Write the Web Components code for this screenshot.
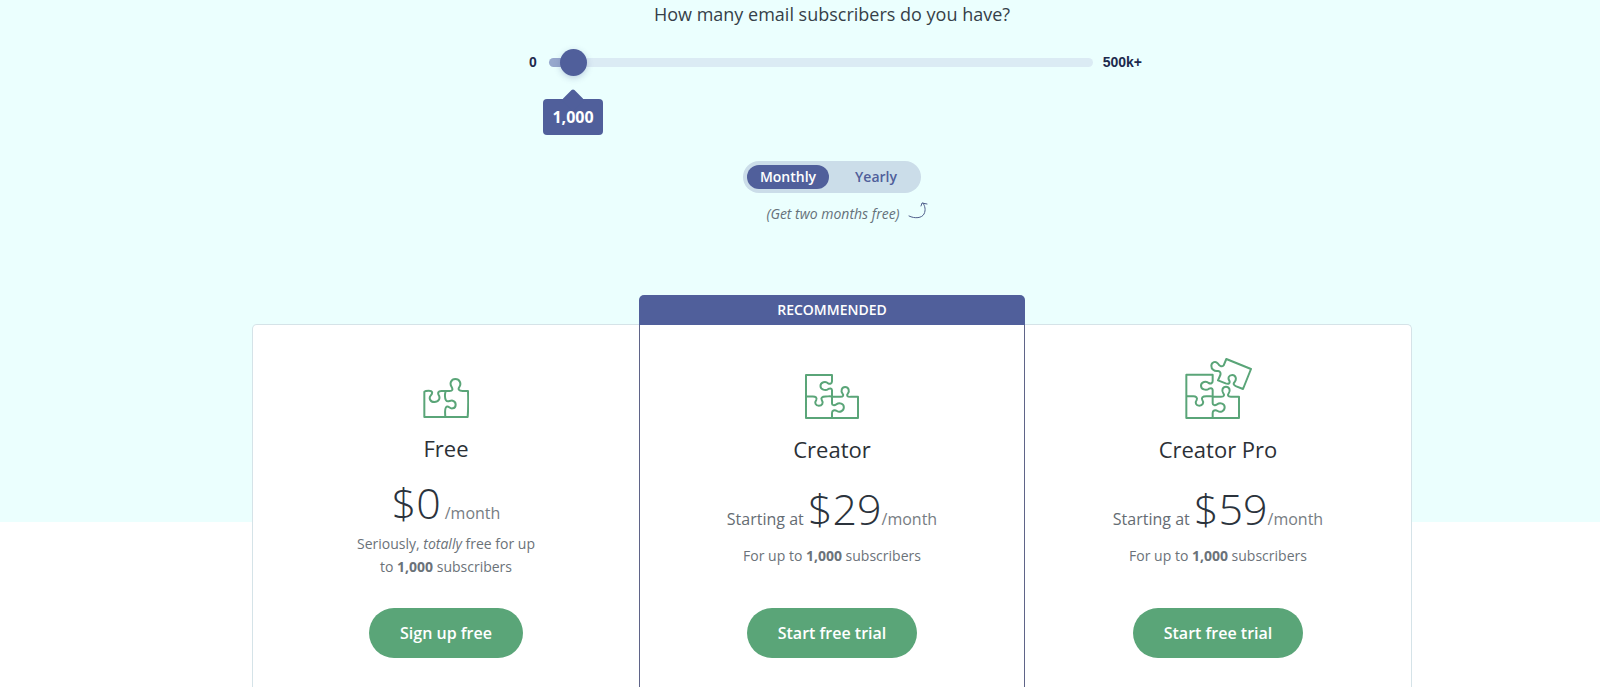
<!DOCTYPE html>
<html lang="en">
<head>
<meta charset="utf-8">
<meta name="viewport" content="width=device-width, initial-scale=1">
<title>Pricing</title>
<style>
body {
  margin: 0;
  font-family: "Open Sans", "Noto Sans", sans-serif;
  color: #363f49;
  --indigo: #505f9b;
  --green: #5aa578;
  --tint: #ebfffe;
}
</style>
</head>
<body>
<pricing-page>
  <subscriber-slider slot="controls"></subscriber-slider>
  <billing-toggle slot="controls"></billing-toggle>

  <plan-card compact>
    <puzzle-icon slot="icon" pieces="2"></puzzle-icon>
    <span slot="name">Free</span>
    <span slot="price">$0</span>
    <span slot="note">Seriously, <em>totally</em> free for up<br>to <b>1,000</b> subscribers</span>
    <span slot="action">Sign up free</span>
  </plan-card>
  <plan-card recommended>
    <puzzle-icon slot="icon" pieces="3"></puzzle-icon>
    <span slot="name">Creator</span>
    <span slot="prefix">Starting at</span>
    <span slot="price">$29</span>
    <span slot="note">For up to <b>1,000</b> subscribers</span>
    <span slot="action">Start free trial</span>
  </plan-card>
  <plan-card>
    <puzzle-icon slot="icon" pieces="4"></puzzle-icon>
    <span slot="name">Creator Pro</span>
    <span slot="prefix">Starting at</span>
    <span slot="price">$59</span>
    <span slot="note">For up to <b>1,000</b> subscribers</span>
    <span slot="action">Start free trial</span>
  </plan-card>
</pricing-page>

<script>
class PricingPage extends HTMLElement {
  constructor() {
    super()
    this.attachShadow({ mode: "open" })
  }

  connectedCallback() {
    this.shadowRoot.innerHTML = `
    <style>
    :host {
      display: flex;
      flex-direction: column;
      align-items: center;
      box-sizing: border-box;
      min-height: 100vh;
      padding-left: 64px;
      background: linear-gradient(var(--tint) 522px, #fff 522px);
    }
    .controls {
      display: flex;
      flex-direction: column;
      align-items: center;
      width: 100%;
    }
    .plans {
      flex: 1;
      display: grid;
      grid-template-columns: repeat(3, 1fr);
      box-sizing: border-box;
      width: 100%;
      max-width: 1160px;
      margin-top: 97px;
      background: #fff;
      border: 1px solid #d5e3e8;
      border-bottom: 0;
      border-radius: 5px 5px 0 0;
    }
    </style>
    <div class="controls"><slot name="controls"></slot></div>
    <div class="plans"><slot></slot></div>`
  }
}

class SubscriberSlider extends HTMLElement {
  constructor() {
    super()
    this.attachShadow({ mode: "open" })
  }

  connectedCallback() {
    this.shadowRoot.innerHTML = `
    <style>
    :host {
      display: block;
      width: 620px;
      max-width: 100%;
      text-align: center;
    }
    .question {
      display: block;
      font-size: 18px;
      line-height: 28px;
    }
    .row {
      display: flex;
      align-items: center;
      margin-top: 20px;
      padding-left: 7px;
      font: bold 14px/28px "Liberation Sans", sans-serif;
      color: #1d2a4d;
    }
    .low { width: 20px; text-align: left; }
    .high { margin-left: 10px; }
    .track {
      position: relative;
      flex: 1;
      display: flex;
    }
    input {
      -webkit-appearance: none;
      appearance: none;
      width: 100%;
      height: 9px;
      margin: 0;
      border-radius: 5px;
      background: linear-gradient(to right, #97a8cd 24px, #dbebf4 24px);
    }
    input::-webkit-slider-thumb {
      -webkit-appearance: none;
      width: 27px;
      height: 27px;
      border-radius: 50%;
      background: var(--indigo);
      box-shadow: 0 2px 6px rgba(80, 95, 155, 0.3);
    }
    .bubble {
      position: absolute;
      top: 41px;
      left: 24px;
      transform: translateX(-50%);
      width: 60px;
      border-radius: 4px;
      background: var(--indigo);
      color: #fff;
      font: 700 16px/36px "Open Sans", "Noto Sans", sans-serif;
    }
    .bubble::before {
      content: "";
      position: absolute;
      left: 22px;
      top: -7px;
      width: 16px;
      height: 16px;
      border-radius: 2px;
      background: var(--indigo);
      transform: rotate(45deg);
    }
    .bubble span { position: relative; }
    </style>
    <label class="question" for="count">How many email subscribers do you have?</label>
    <div class="row">
      <span class="low">0</span>
      <div class="track">
        <input id="count" type="range" min="0" max="45" value="1">
        <output class="bubble" for="count"><span>1,000</span></output>
      </div>
      <span class="high">500k+</span>
    </div>`
  }
}

class BillingToggle extends HTMLElement {
  constructor() {
    super()
    this.attachShadow({ mode: "open" })
  }

  connectedCallback() {
    this.shadowRoot.innerHTML = `
    <style>
    :host {
      display: flex;
      flex-direction: column;
      align-items: center;
      margin-top: 85px;
    }
    .switch {
      display: flex;
      padding: 4px;
      border-radius: 16px;
      background: #cbdde9;
    }
    input {
      position: absolute;
      opacity: 0;
      margin: 0;
    }
    label {
      width: 82px;
      border-radius: 12px;
      color: var(--indigo);
      font-size: 14px;
      font-weight: 600;
      line-height: 24px;
      text-align: center;
    }
    label + input + label { margin-left: 6px; }
    input:checked + label {
      background: var(--indigo);
      color: #fff;
    }
    .hint {
      display: flex;
      align-items: center;
      gap: 8px;
      margin: 8px 0 0 30px;
      color: #65717a;
      font-size: 14px;
      font-style: italic;
      line-height: 26px;
    }
    svg { margin-bottom: 8px; }
    </style>
    <div class="switch">
      <input type="radio" name="billing" id="monthly" checked><label for="monthly">Monthly</label>
      <input type="radio" name="billing" id="yearly"><label for="yearly">Yearly</label>
    </div>
    <div class="hint">
      <span>(Get two months free)</span>
      <svg width="20" height="17" viewBox="0 0 20 17" fill="none" stroke="#505f8b" stroke-width="1" stroke-linecap="round">
        <path d="M1 14C7 17 14 16 16 12C18 8 17 4 15 1M13 4L14 1L19 2"/>
      </svg>
    </div>`
  }
}

// Three interlocking pieces, shared by the two larger icons
const threePieces = `
  <path d="M111 104V84C110 77 104 78 100 80C91 87 76 82 76 71C76 59 92 56 99 63C105 66 111 64 111 57V38H32V168H190V104H168C156 105 155 99 159 94C165 87 162 74 151 74C140 74 137 87 143 94C147 99 146 104 136 104H111C108 101 100 103 92 103C79 103 77 108 80 114C86 122 81 131 71 131C61 131 57 122 63 114C66 107 62 102 50 103H32"/>
  <path d="M111 104V124C111 130 118 131 124 127C134 120 147 125 147 136C147 148 134 152 126 147C118 142 111 146 111 153V168"/>`

const puzzles = {
  2: {
    box: "38 38 136 120",
    width: 46,
    height: 40,
    art: `
  <path d="M41 78V155H171C173 130 173 105 172 77H156C143 77 142 71 146 65C153 55 147 41 134 41C121 41 116 55 123 65C127 72 126 77 117 77H92C82 77 81 83 84 89C90 99 84 110 71 110C58 110 54 98 60 91C67 83 66 76 54 76C48 76 44 76 41 79"/>
  <path d="M105 77C102 88 102 98 106 105C111 113 118 104 126 106C138 109 138 127 126 129C116 131 115 121 108 124C101 128 103 142 104 155"/>`
  },
  3: { box: "29 35 164 136", width: 54, height: 45, art: threePieces },
  4: {
    box: "42 25 201 183",
    width: 67,
    height: 61,
    art: `
  <g transform="translate(14 37)">${threePieces}</g>
  <path d="M166 28L240 58L216 118L196 110C187 106 186 102 191 97C198 88 194 76 184 76C173 76 170 86 175 93C178 101 173 104 164 101L141 92L148 76C150 69 147 65 141 64C129 66 121 58 121 48C122 37 134 33 140 41C145 49 152 53 158 47Z"/>`
  }
}

class PuzzleIcon extends HTMLElement {
  constructor() {
    super()
    this.attachShadow({ mode: "open" })
  }

  connectedCallback() {
    const { box, width, height, art } = puzzles[this.getAttribute("pieces")]
    this.shadowRoot.innerHTML = `
    <style>
    :host { display: block; line-height: 0; }
    </style>
    <svg width="${width}" height="${height}" viewBox="${box}" fill="none" stroke="#5aa578" stroke-width="6" stroke-linejoin="round" aria-hidden="true">${art}</svg>`
  }
}

class PlanCard extends HTMLElement {
  constructor() {
    super()
    this.attachShadow({ mode: "open" })
  }

  connectedCallback() {
    const banner = this.hasAttribute("recommended")
      ? `<div class="banner">RECOMMENDED</div>`
      : ""
    this.shadowRoot.innerHTML = `
    <style>
    :host {
      position: relative;
      display: flex;
      flex-direction: column;
      align-items: center;
      padding: 33px 20px 28px;
      text-align: center;
    }
    :host([recommended]) {
      border: solid #5f6488;
      border-width: 0 1px;
    }
    .banner {
      position: absolute;
      bottom: 100%;
      left: -1px;
      right: -1px;
      border-radius: 5px 5px 0 0;
      background: var(--indigo);
      color: #fff;
      font-size: 14px;
      font-weight: 600;
      line-height: 30px;
    }
    .icon {
      display: flex;
      align-items: flex-end;
      height: 61px;
    }
    h2 {
      margin: 14px 0 0;
      font-size: 22px;
      font-weight: 400;
      line-height: 32px;
      color: #2b3036;
    }
    .price {
      margin: 25px 0 0;
      font-size: 16px;
      line-height: 38px;
      color: #777d83;
      white-space: nowrap;
    }
    .prefix { color: #656c73; }
    .amount {
      font-size: 43px;
      font-weight: 300;
      color: #2b333c;
    }
    .note {
      margin: 6px 0 0;
      min-height: 64px;
      font-size: 14px;
      line-height: 23px;
      color: #6b7279;
    }
    :host([compact]) .icon { height: 60px; }
    :host([compact]) .price { margin-top: 20px; }
    :host([compact]) .amount { margin-right: 4px; }
    :host([compact]) .note { margin-top: 0; min-height: 76px; }
    button {
      height: 50px;
      padding: 0 31px;
      border: 0;
      border-radius: 25px;
      background: var(--green);
      color: #fff;
      font: 600 16px/24px "Open Sans", "Noto Sans", sans-serif;
      cursor: pointer;
    }
    </style>
    ${banner}
    <div class="icon"><slot name="icon"></slot></div>
    <h2><slot name="name"></slot></h2>
    <p class="price"><span class="prefix"><slot name="prefix"></slot></span> <span class="amount"><slot name="price"></slot></span>/month</p>
    <p class="note"><slot name="note"></slot></p>
    <button type="button"><slot name="action"></slot></button>`
  }
}

customElements.define("pricing-page", PricingPage)
customElements.define("subscriber-slider", SubscriberSlider)
customElements.define("billing-toggle", BillingToggle)
customElements.define("puzzle-icon", PuzzleIcon)
customElements.define("plan-card", PlanCard)
</script>
</body>
</html>
